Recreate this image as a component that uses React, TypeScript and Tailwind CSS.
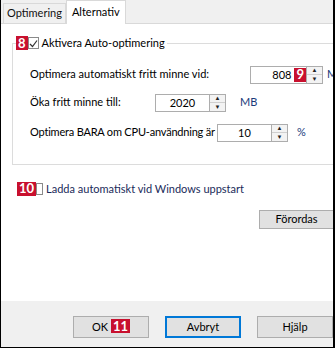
import React from "react";

const font = { fontFamily: 'Lato, "Liberation Sans", sans-serif' };

function Badge({ n }: { n: string }) {
  return (
    <span className="inline-flex h-[14px] items-center justify-center bg-[#c8102e] px-[2px] text-[13px] font-bold leading-none text-white">
      {n}
    </span>
  );
}

function Spin() {
  return (
    <div className="flex h-full w-[16px] flex-col border border-l-0 border-[#adadad] bg-[#f3f3f3]">
      <div className="flex flex-1 items-center justify-center border-b border-[#cfcfcf] text-[6px] leading-none text-[#222]">
        ▲
      </div>
      <div className="flex flex-1 items-center justify-center text-[6px] leading-none text-[#222]">
        ▼
      </div>
    </div>
  );
}

function NumberBox({
  value,
  width,
  align,
  badge,
}: {
  value: string;
  width: string;
  align: "right" | "center";
  badge?: string;
}) {
  return (
    <div className="flex h-[18px] items-stretch">
      <div
        className={`flex ${width} items-center border border-[#adadad] bg-white ${
          align === "right" ? "justify-end" : "justify-center"
        }`}
      >
        <span className="text-[11px] leading-none">{value}</span>
        {badge && (
          <span className="ml-[3px] flex h-full items-center">
            <Badge n={badge} />
          </span>
        )}
      </div>
      <Spin />
    </div>
  );
}

function Button({ label, primary, badge }: { label: string; primary?: boolean; badge?: string }) {
  return (
    <div
      className={`flex h-[22px] w-[76px] items-center justify-center bg-[#e1e1e1] text-[11px] ${
        primary ? "border-2 border-[#0078d7]" : "border border-[#adadad]"
      }`}
    >
      <span>{label}</span>
      {badge && (
        <span className="ml-[3px]">
          <Badge n={badge} />
        </span>
      )}
    </div>
  );
}

export default function App() {
  return (
    <div
      className="h-[348px] w-[335px] overflow-hidden border-b border-l border-r-2 border-black bg-[#f0f0f0] text-[#000]"
      style={font}
    >
      <div className="flex h-full flex-col">
        {/* Tabs */}
        <div className="relative z-10 flex h-[23px] items-end pl-[2px]">
          <div className="flex h-[20px] items-center border border-b-0 border-[#d9d9d9] bg-[#f0f0f0] px-[3px] text-[11px] text-[#111]">
            Optimering
          </div>
          <div className="-mb-px flex h-[24px] items-center border border-b-0 border-[#d9d9d9] bg-white px-[5px] text-[11px]">
            Alternativ
          </div>
        </div>

        {/* Panel */}
        <div className="h-[278px] border-t border-[#d9d9d9] bg-white pt-[11px]">
          <fieldset className="ml-[11px] w-[340px] border border-[#dcdcdc] pb-[22px] pl-[17px]">
            <legend className="-ml-[14px] flex items-center">
              <Badge n="8" />
              <span className="flex h-[12px] w-[11px] items-center justify-center border border-[#8a8a8a] bg-white">
                <svg width="9" height="9" viewBox="0 0 9 9">
                  <path d="M1 5 L3.5 7.5 L8 1.5" stroke="#333" strokeWidth="1.2" fill="none" />
                </svg>
              </span>
              <span className="ml-[3px] pr-[2px] text-[11px]">Aktivera Auto-optimering</span>
            </legend>

            <div className="mt-[14px] flex h-[18px] items-center">
              <span className="w-[220px] whitespace-nowrap text-[11px]">Optimera automatiskt fritt minne vid:</span>
              <NumberBox value="808" width="w-[57px]" align="right" badge="9" />
              <span className="ml-[4px] text-[11px] text-[#1a3a7a]">MB</span>
            </div>

            <div className="mt-[10px] flex h-[18px] items-center">
              <span className="w-[125px] whitespace-nowrap text-[11px]">Öka fritt minne till:</span>
              <NumberBox value="2020" width="w-[55px]" align="center" />
              <span className="ml-[14px] text-[11px] text-[#1a3a7a]">MB</span>
            </div>

            <div className="mt-[12px] flex h-[18px] items-center">
              <span className="w-[187px] whitespace-nowrap text-[11px] tracking-[-0.2px]">
                Optimera BARA om CPU-användning är
              </span>
              <NumberBox value="10" width="w-[55px]" align="center" />
              <span className="ml-[9px] text-[11px] text-[#1a3a7a]">%</span>
            </div>
          </fieldset>

          <div className="ml-[16px] mt-[16px] flex items-center">
            <Badge n="10" />
            <span className="h-[12px] w-[7px] border border-[#8a8a8a] bg-white" />
            <span className="ml-[3px] text-[11px] text-[#1a2a5a]">Ladda automatiskt vid Windows uppstart</span>
          </div>

          <div className="mt-[13px] flex justify-end">
            <div className="flex h-[19px] w-[74px] items-center justify-center border border-[#adadad] border-r-0 bg-[#e1e1e1] text-[11px]">
              Förordas
            </div>
          </div>
        </div>

        {/* Bottom buttons */}
        <div className="flex flex-1 items-start justify-end gap-[16px] pt-[15px]">
          <Button label="OK" badge="11" />
          <Button label="Avbryt" primary />
          <Button label="Hjälp" />
        </div>
      </div>
    </div>
  );
}
